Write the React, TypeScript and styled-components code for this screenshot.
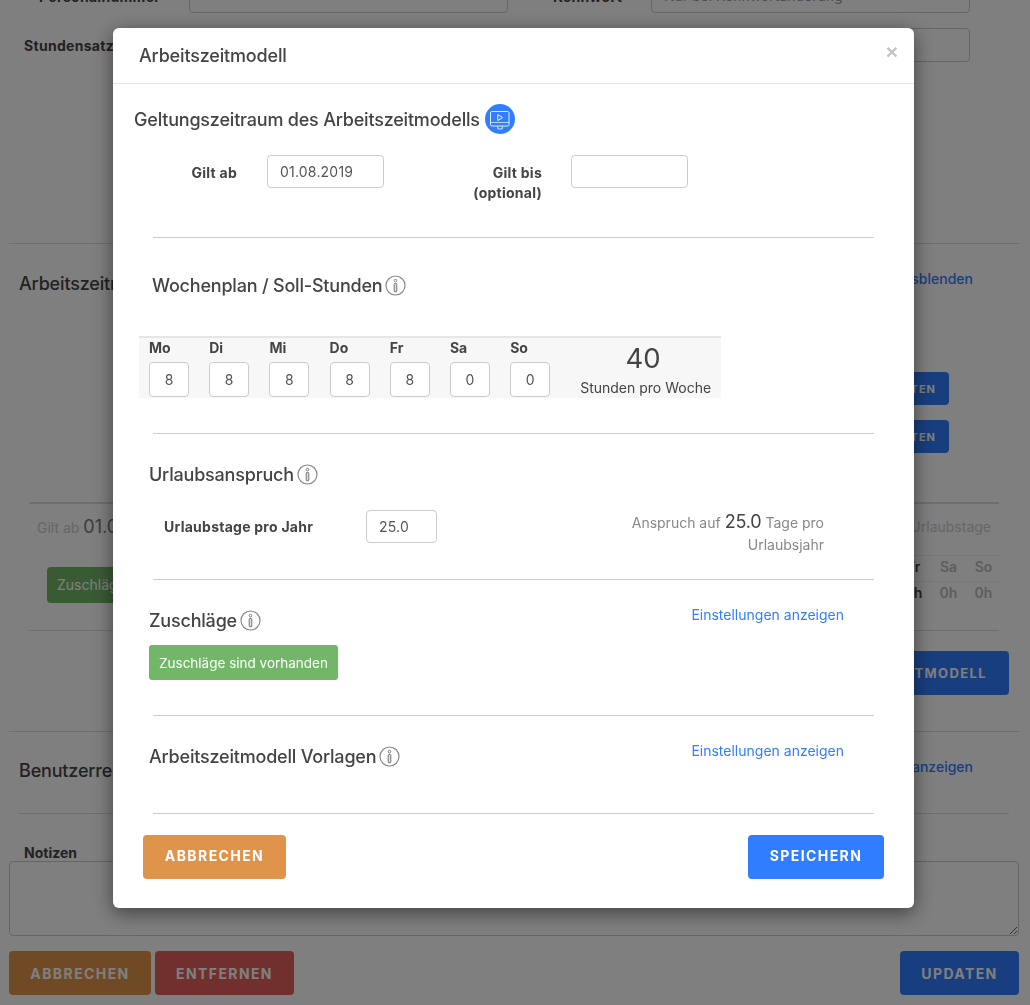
import React from 'react';
import styled, { createGlobalStyle } from 'styled-components';

const Global = createGlobalStyle`
  html, body { margin: 0; padding: 0; height: 100%; overflow: hidden; background: #fff; }
  * { box-sizing: border-box; }
  body { font-family: Inter, "Liberation Sans", sans-serif; color: #444; -webkit-font-smoothing: antialiased; }
`;

/* ---------- page behind the dialog ---------- */
const Page = styled.div`
  height: 1005px; overflow: hidden; padding: 0 11px 0 9px; background: #fff;
`;
const TopRow = styled.div<{ $top?: number; $left?: number }>`
  display: flex; align-items: center; height: 34px; margin-top: ${p => p.$top ?? 15}px;
  padding-left: ${p => p.$left ?? 0}px; padding-right: 49px;
`;
const BgLabel = styled.label<{ $w: number }>`
  width: ${p => p.$w}px; padding-top: 1px; font-size: 14px; font-weight: 700; letter-spacing: 0.3px; color: #444; flex: none;
`;
const BgInput = styled.div<{ $w: number; $gap?: number }>`
  width: ${p => p.$w}px; height: 34px; margin-right: ${p => p.$gap ?? 0}px; flex: none;
  border: 1px solid #ccc; border-radius: 4px; background: #fff;
  font-size: 14px; line-height: 32px; padding-left: 12px; color: #999;
`;
const BgRule = styled.hr<{ $mt: number; $l?: number; $r?: number; $h?: number }>`
  margin: ${p => p.$mt}px ${p => p.$r ?? 0}px 0 ${p => p.$l ?? 0}px; border: 0;
  height: ${p => p.$h ?? 1}px; background: #ddd;
`;
const BgHead = styled.div<{ $h: number; $mt: number }>`
  display: flex; justify-content: space-between; align-items: flex-start;
  height: ${p => p.$h}px; margin-top: ${p => p.$mt}px; padding: 0 46px 0 10px;
`;
const BgTitle = styled.h3`
  margin: 5px 0 0; font-size: 18px; line-height: 30px; font-weight: 500; letter-spacing: -0.17px; color: #444;
`;
const BgLink = styled.a<{ $top: number }>`
  margin-top: ${p => p.$top}px; font-size: 14px; line-height: 20px; color: #307dff; font-weight: 500;
`;
const Stack = styled.div`
  display: flex; flex-direction: column; align-items: flex-end; gap: 15px;
  height: 81px; margin-top: 76px; padding-right: 70px;
`;
const SmallBlue = styled.button`
  padding: 0 13px; height: 33px; border: 0; border-radius: 4px; background: #307dff; color: #fff;
  font: 700 11px Inter, sans-serif; letter-spacing: 1px;
`;
const ListBlock = styled.div`
  margin: 0 20px;
`;
const ListHead = styled.div`
  display: flex; justify-content: space-between; align-items: center; height: 44px; padding: 0 8px;
  font-size: 14px; color: #ccc;
`;
const BigVal = styled.span`
  font-size: 18px; color: #777;
`;
const ListBody = styled.div`
  display: flex; justify-content: space-between; height: 82px;
`;
const GreenBtnBg = styled.div`
  width: 140px; height: 36px; margin: 19px 0 0 18px; border-radius: 4px; background: #72b668;
  color: #fff; font-size: 14px; line-height: 36px; padding-left: 10px;
`;
const MiniTable = styled.div`
  display: grid; grid-template-columns: repeat(3, 35px); width: 105px; margin: 7px -2px 0 0;
  border-top: 1px solid #eee; height: 52px; font-size: 14px; font-weight: 600;
`;
const MiniCell = styled.div<{ $dark?: boolean; $line?: boolean }>`
  height: 26px; line-height: 22px; text-align: center; color: ${p => (p.$dark ? '#444' : '#bbb')};
  border-bottom: ${p => (p.$line ? '1px solid #eee' : '0')};
`;
const RightBtnRow = styled.div`
  display: flex; justify-content: flex-end; margin-top: 20px; padding-right: 10px;
`;
const WideBtn = styled.button`
  padding: 0 22px; height: 44px; border: 0; border-radius: 4px; background: #307dff; color: #fff;
  font: 700 13px Inter, sans-serif; letter-spacing: 1.4px;
`;
const BgBtn = styled.button<{ $c: string; $w: number }>`
  width: ${p => p.$w}px; height: 44px; border: 0; border-radius: 4px; background: ${p => p.$c}; color: #fff;
  font: 700 14px Inter, sans-serif; letter-spacing: 1.4px;
`;
const Notes = styled.div`
  padding: 0 0 0 15px; margin-top: 30px; height: 17px; font-size: 14px; line-height: 18px; font-weight: 700; color: #444;
`;
const NotesArea = styled.textarea`
  display: block; width: 100%; height: 75px; border: 1px solid #ccc; border-radius: 4px; background: #fff;
`;
const BottomRow = styled.div`
  display: flex; gap: 4px; margin-top: 15px;
`;
const PushRight = styled.div`
  margin-left: auto;
`;

/* ---------- dialog ---------- */
const Overlay = styled.div`
  position: fixed; inset: 0; background: rgba(0, 0, 0, 0.5); padding: 28px 0 0 113px;
`;
const Dialog = styled.div`
  width: 801px; height: 880px; background: #fff; border-radius: 6px;
  box-shadow: 0 5px 20px rgba(0, 0, 0, 0.5);
  display: flex; flex-direction: column;
`;
const DialogHeader = styled.header`
  display: flex; justify-content: space-between; height: 56px; padding: 0 16px 0 26px;
  border-bottom: 1px solid #e5e5e5; flex: none;
`;
const DialogTitle = styled.h2`
  margin: 0; font-size: 18px; line-height: 55px; font-weight: 500; letter-spacing: -0.17px; color: #444;
`;
const Close = styled.span`
  font-size: 21px; line-height: 47px; font-weight: 700; color: #c4c4c4; font-family: "Liberation Sans", sans-serif;
`;
const Section = styled.section<{ $h: number; $pt: number; $pl?: number }>`
  height: ${p => p.$h}px; padding: ${p => p.$pt}px 70px 0 ${p => p.$pl ?? 36}px; flex: none;
`;
const Divider = styled.hr`
  margin: 0 40px; border: 0; height: 1px; background: #ccc; flex: none;
`;
const Heading = styled.h3`
  display: flex; align-items: center; gap: 4px; margin: 0; height: 30px;
  font-size: 18px; font-weight: 500; letter-spacing: -0.2px; color: #444; white-space: nowrap;
`;
const DateRow = styled.div`
  display: flex; margin-top: 21px;
`;
const FieldLabel = styled.label<{ $w: number; $r: number }>`
  width: ${p => p.$w}px; margin-right: ${p => p.$r}px; padding-top: 8px; flex: none;
  font-size: 14px; line-height: 20px; font-weight: 700; letter-spacing: 0.25px; color: #444; text-align: right;
`;
const TextBox = styled.div<{ $w: number; $r?: number }>`
  width: ${p => p.$w}px; height: 33px; margin-right: ${p => p.$r ?? 0}px; flex: none;
  border: 1px solid #ccc; border-radius: 4px; background: #fff; color: #555;
  font-size: 14px; line-height: 31px; padding-left: 12px; letter-spacing: 0.2px;
`;
const Week = styled.div`
  display: flex; width: 582px; height: 62px; margin: 36px 0 0 -13px; background: #f7f7f7;
  border-top: 2px solid #e6e6e6; padding-left: 10px;
`;
const Day = styled.div`
  width: 60.2px; flex: none;
`;
const DayName = styled.div`
  height: 24px; font-size: 14px; line-height: 20px; font-weight: 700; color: #444;
`;
const DayBox = styled.div`
  width: 40px; height: 35px; border: 1px solid #ccc; border-radius: 4px; background: #fff;
  text-align: center; font-size: 14px; line-height: 33px; color: #555;
`;
const Total = styled.div`
  flex: 1; text-align: center;
`;
const TotalNum = styled.div`
  padding-right: 5px; font-size: 27.5px; line-height: 40px; color: #444;
`;
const TotalCap = styled.div`
  font-size: 14px; line-height: 20px; color: #444;
`;
const LeaveRow = styled.div`
  display: flex; margin-top: 21px;
`;
const LeaveLabel = styled.label`
  width: 202px; margin-left: 15px; flex: none; padding-top: 7px;
  font-size: 14px; line-height: 20px; font-weight: 700; letter-spacing: 0.25px; color: #444;
`;
const Claim = styled.p`
  width: 200px; margin: 1px 20px 0 auto; font-size: 14px; line-height: 22px; color: #888; text-align: right;
`;
const ClaimNum = styled.span`
  font-size: 18px; letter-spacing: -0.17px; color: #444;
`;
const HeadRow = styled.div`
  display: flex; justify-content: space-between; align-items: flex-start;
`;
const Link = styled.a`
  font-size: 14px; line-height: 20px; color: #307dff; font-weight: 400;
`;
const GreenBadge = styled.div`
  width: 189px; height: 35px; margin-top: 10px; padding-top: 1px; border-radius: 3px; background: #72b668; color: #fff;
  font-size: 13.5px; line-height: 35px; text-align: center;
`;
const Footer = styled.footer`
  display: flex; justify-content: space-between; padding: 21px 30px 0; flex: none;
`;
const Action = styled.button<{ $c: string; $w: number }>`
  width: ${p => p.$w}px; height: 44px; padding: 0 0 3px; border: 0; border-radius: 4px; background: ${p => p.$c}; color: #fff;
  font: 700 14px Inter, sans-serif; letter-spacing: 1.4px;
`;
const InfoSvg = styled.svg`
  margin-left: -1px; flex: none;
`;
const VideoSvg = styled.svg`
  margin-left: 1px; flex: none;
`;

const InfoIcon = () => (
  <InfoSvg width="21" height="21" viewBox="0 0 21 21" fill="none" aria-hidden>
    <circle cx="10.5" cy="10.5" r="9.5" stroke="#8a8a8a" strokeWidth="1.2" />
    <circle cx="10.5" cy="5.6" r="1.3" stroke="#777" strokeWidth="0.9" />
    <rect x="9.2" y="8.4" width="2.6" height="8.4" rx="0.8" stroke="#777" strokeWidth="1" fill="#ddd" />
  </InfoSvg>
);

const VideoIcon = () => (
  <VideoSvg width="30" height="30" viewBox="0 0 30 30" fill="none" aria-hidden>
    <circle cx="15" cy="15" r="15" fill="#307dff" />
    <rect x="5.5" y="7.5" width="18.5" height="14.5" rx="1.4" stroke="#fff" strokeOpacity="0.85" strokeWidth="1" />
    <path d="M5.5 18.5h18.5" stroke="#fff" strokeOpacity="0.75" strokeWidth="0.9" />
    <path d="M12.8 10.6l4.8 3-4.8 3z" stroke="#fff" strokeOpacity="0.9" strokeWidth="1" />
    <path d="M12.8 22v3h4.4v-3" stroke="#fff" strokeOpacity="0.85" strokeWidth="0.9" />
  </VideoSvg>
);

const days: [string, string][] = [['Mo', '8'], ['Di', '8'], ['Mi', '8'], ['Do', '8'], ['Fr', '8'], ['Sa', '0'], ['So', '0']];

export default function App() {
  return (
    <>
      <Global />
      <Page>
        <TopRow $top={-21} $left={30}>
          <BgLabel $w={150}>Personalnummer</BgLabel>
          <BgInput $w={319} $gap={45} />
          <BgLabel $w={98}>Kennwort</BgLabel>
          <BgInput $w={319}>Nur bei Kennwortänderung</BgInput>
        </TopRow>
        <TopRow $left={15}>
          <BgLabel $w={165}>Stundensatz</BgLabel>
          <BgInput $w={319} $gap={143} />
          <BgInput $w={319} />
        </TopRow>
        <BgRule $mt={181} />
        <BgHead $h={32} $mt={20}>
          <BgTitle>Arbeitszeitmodelle</BgTitle>
          <BgLink $top={5}>Arbeitszeitmodelle ausblenden</BgLink>
        </BgHead>
        <Stack>
          <SmallBlue>BEARBEITEN</SmallBlue>
          <SmallBlue>BEARBEITEN</SmallBlue>
        </Stack>
        <ListBlock>
          <BgRule $mt={49} $h={2} />
          <ListHead>
            <span>Gilt ab <BigVal>01.08.2019</BigVal></span>
            <span>Urlaubstage</span>
          </ListHead>
          <ListBody>
            <GreenBtnBg>Zuschläge</GreenBtnBg>
            <MiniTable>
              <MiniCell $dark $line>Fr</MiniCell><MiniCell $line>Sa</MiniCell><MiniCell $line>So</MiniCell>
              <MiniCell $dark>8h</MiniCell><MiniCell>0h</MiniCell><MiniCell>0h</MiniCell>
            </MiniTable>
          </ListBody>
          <BgRule $mt={0} $h={1} />
        </ListBlock>
        <RightBtnRow><WideBtn>ARBEITSZEITMODELL</WideBtn></RightBtnRow>
        <BgRule $mt={36} />
        <BgHead $h={35} $mt={19}>
          <BgTitle>Benutzerrechte</BgTitle>
          <BgLink $top={6}>Einstellungen anzeigen</BgLink>
        </BgHead>
        <BgRule $mt={27} $l={10} $r={10} />
        <Notes>Notizen</Notes>
        <NotesArea readOnly />
        <BottomRow>
          <BgBtn $c="#e0934a" $w={142}>ABBRECHEN</BgBtn>
          <BgBtn $c="#e2605c" $w={139}>ENTFERNEN</BgBtn>
          <PushRight><BgBtn $c="#307dff" $w={119}>UPDATEN</BgBtn></PushRight>
        </BottomRow>
      </Page>
      <Overlay>
        <Dialog>
          <DialogHeader>
            <DialogTitle>Arbeitszeitmodell</DialogTitle>
            <Close>×</Close>
          </DialogHeader>
          <Section $h={153} $pt={20} $pl={21}>
            <Heading>Geltungszeitraum des Arbeitszeitmodells <VideoIcon /></Heading>
            <DateRow>
              <FieldLabel $w={103} $r={30}>Gilt ab</FieldLabel>
              <TextBox $w={117} $r={88}>01.08.2019</TextBox>
              <FieldLabel $w={70} $r={29}>Gilt bis (optional)</FieldLabel>
              <TextBox $w={117} />
            </DateRow>
          </Section>
          <Divider />
          <Section $h={195} $pt={32} $pl={39}>
            <Heading>Wochenplan / Soll-Stunden <InfoIcon /></Heading>
            <Week>
              {days.map(([d, v]) => (
                <Day key={d}>
                  <DayName>{d}</DayName>
                  <DayBox>{v}</DayBox>
                </Day>
              ))}
              <Total>
                <TotalNum>40</TotalNum>
                <TotalCap>Stunden pro Woche</TotalCap>
              </Total>
            </Week>
          </Section>
          <Divider />
          <Section $h={145} $pt={25}>
            <Heading>Urlaubsanspruch <InfoIcon /></Heading>
            <LeaveRow>
              <LeaveLabel>Urlaubstage pro Jahr</LeaveLabel>
              <TextBox $w={71}>25.0</TextBox>
              <Claim>Anspruch auf <ClaimNum>25.0</ClaimNum> Tage pro Urlaubsjahr</Claim>
            </LeaveRow>
          </Section>
          <Divider />
          <Section $h={135} $pt={25}>
            <HeadRow>
              <Heading>Zuschläge <InfoIcon /></Heading>
              <Link>Einstellungen anzeigen</Link>
            </HeadRow>
            <GreenBadge>Zuschläge sind vorhanden</GreenBadge>
          </Section>
          <Divider />
          <Section $h={97} $pt={25}>
            <HeadRow>
              <Heading>Arbeitszeitmodell Vorlagen <InfoIcon /></Heading>
              <Link>Einstellungen anzeigen</Link>
            </HeadRow>
          </Section>
          <Divider />
          <Footer>
            <Action $c="#e0934a" $w={143}>ABBRECHEN</Action>
            <Action $c="#307dff" $w={136}>SPEICHERN</Action>
          </Footer>
        </Dialog>
      </Overlay>
    </>
  );
}
